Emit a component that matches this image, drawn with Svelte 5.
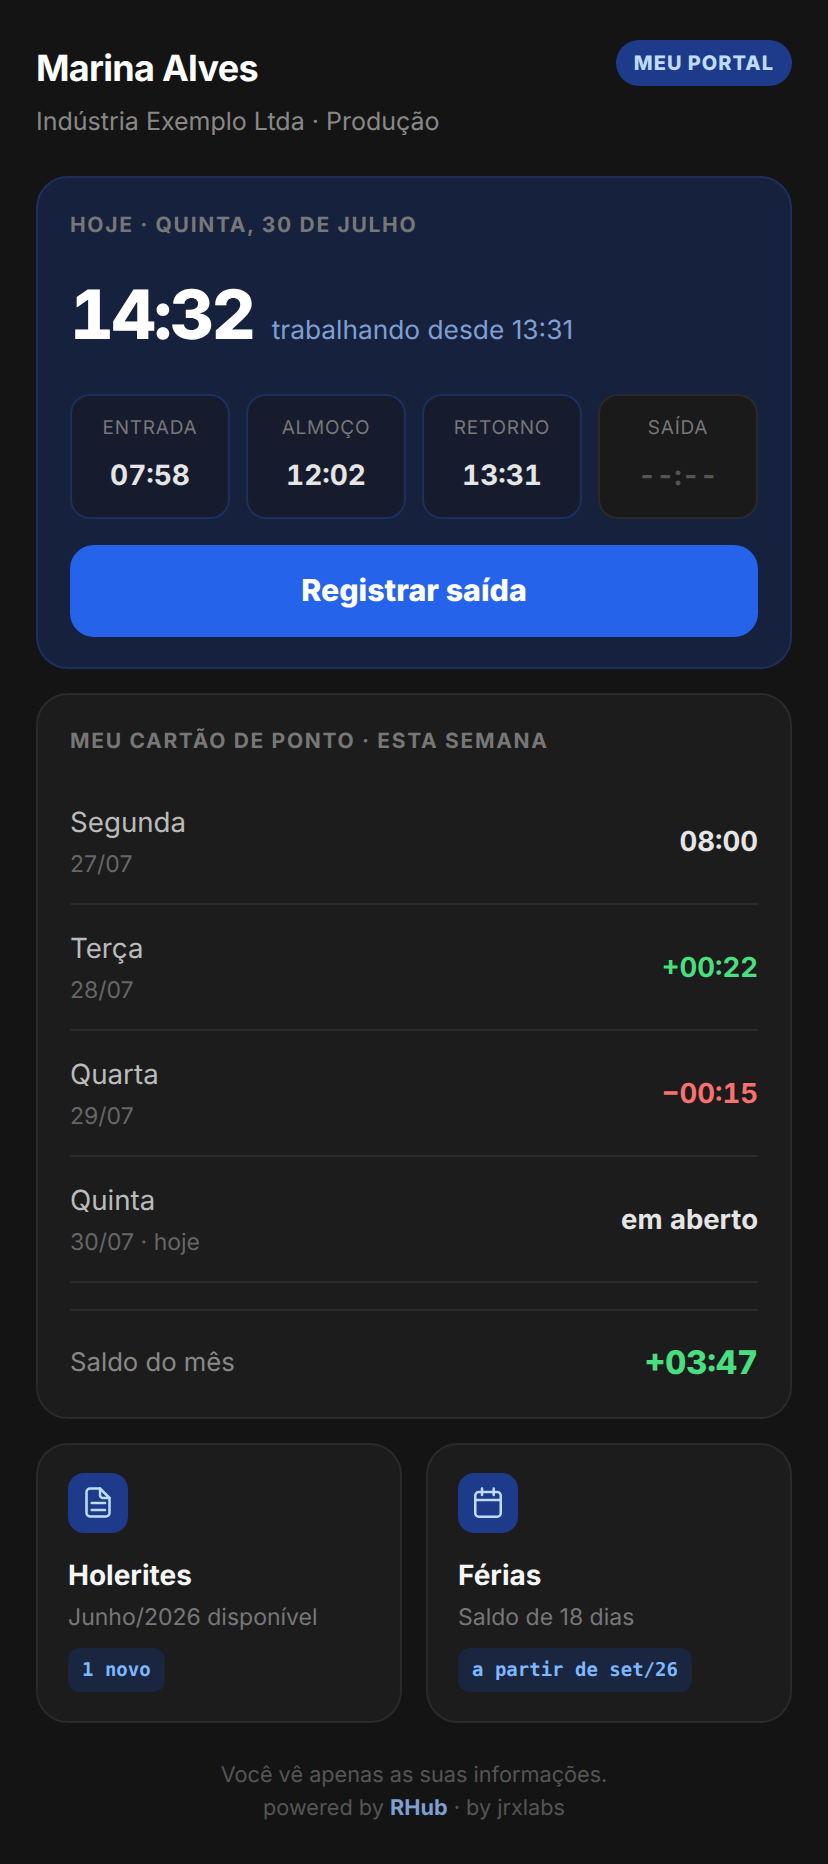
<script>
  const punches = [
    { label: 'Entrada', time: '07:58' },
    { label: 'Almoço', time: '12:02' },
    { label: 'Retorno', time: '13:31' },
    { label: 'Saída', time: '--:--', empty: true }
  ];

  const days = [
    { name: 'Segunda', date: '27/07', value: '08:00' },
    { name: 'Terça', date: '28/07', value: '+00:22', tone: 'pos' },
    { name: 'Quarta', date: '29/07', value: '−00:15', tone: 'neg' },
    { name: 'Quinta', date: '30/07 · hoje', value: 'em aberto' }
  ];
</script>

<div class="page">
  <header class="top">
    <div>
      <h1>Marina Alves</h1>
      <p class="org">Indústria Exemplo Ltda · Produção</p>
    </div>
    <span class="badge">MEU PORTAL</span>
  </header>

  <section class="card hero">
    <div class="eyebrow">Hoje · Quinta, 30 de julho</div>
    <div class="clock">
      <span class="now">14:32</span>
      <span class="since">trabalhando desde 13:31</span>
    </div>
    <div class="punches">
      {#each punches as p}
        <div class="punch" class:empty={p.empty}>
          <span class="punch-label">{p.label}</span>
          <span class="punch-time">{p.time}</span>
        </div>
      {/each}
    </div>
    <button type="button" class="register">Registrar saída</button>
  </section>

  <section class="card week">
    <div class="eyebrow">Meu cartão de ponto · Esta semana</div>
    <div class="days">
      {#each days as d}
        <div class="day">
          <div>
            <div class="day-name">{d.name}</div>
            <div class="day-date">{d.date}</div>
          </div>
          <div class="day-value {d.tone ?? ''}">{d.value}</div>
        </div>
      {/each}
    </div>
    <div class="total">
      <span>Saldo do mês</span>
      <span class="total-value">+03:47</span>
    </div>
  </section>

  <div class="links">
    <section class="card link">
      <div class="icon">
        <svg viewBox="0 0 40 40" width="40" height="40" fill="none" stroke="currentColor" stroke-width="2.5" stroke-linecap="round" stroke-linejoin="round">
          <path d="M22 5.5H12A3.5 3.5 0 0 0 8.5 9v21a3.5 3.5 0 0 0 3.5 3.5h16a3.5 3.5 0 0 0 3.5-3.5V15z" />
          <path d="M22 5.5V12a3 3 0 0 0 3 3h6.5" />
          <path d="M13.7 20h13.3M13.7 27h13.3" />
        </svg>
      </div>
      <h2>Holerites</h2>
      <p>Junho/2026 disponível</p>
      <span class="tag">1 novo</span>
    </section>
    <section class="card link">
      <div class="icon">
        <svg viewBox="0 0 40 40" width="40" height="40" fill="none" stroke="currentColor" stroke-width="2.5" stroke-linecap="round" stroke-linejoin="round">
          <rect x="7.25" y="9" width="25.5" height="24.75" rx="3.5" />
          <path d="M14 5.5v6.5M25.7 5.5v6.5M7.25 17h25.5" />
        </svg>
      </div>
      <h2>Férias</h2>
      <p>Saldo de 18 dias</p>
      <span class="tag">a partir de set/26</span>
    </section>
  </div>

  <footer>
    <div>Você vê apenas as suas informações.</div>
    <div>powered by <strong>RHub</strong> · by jrxlabs</div>
  </footer>
</div>

<style>
  :global(body) {
    background: #141414;
  }

  .page {
    box-sizing: border-box;
    width: 828px;
    min-height: 1864px;
    padding: 40px 36px;
    font-family: Inter, "Liberation Sans", sans-serif;
    color: #f5f5f5;
    text-rendering: geometricPrecision;
  }

  .top {
    display: flex;
    justify-content: space-between;
    align-items: flex-start;
    margin-bottom: 35px;
  }

  h1 {
    margin: 6px 0 0;
    font-size: 36px;
    line-height: 44px;
    font-weight: 700;
    letter-spacing: -0.72px;
    color: #fff;
  }

  .org {
    margin: 13px 0 0;
    font-size: 25px;
    line-height: 38px;
    color: #888;
  }

  .badge {
    display: flex;
    align-items: center;
    height: 46px;
    padding: 0 18px;
    border-radius: 999px;
    background: #1e3a8a;
    color: #bfdbfe;
    font-size: 20px;
    font-weight: 800;
    letter-spacing: 1px;
  }

  .card {
    box-sizing: border-box;
    border: 2px solid #2a2a2a;
    border-radius: 32px;
    background: #1c1c1c;
  }

  .hero {
    height: 493px;
    padding: 34px 32px 32px;
    margin-bottom: 24px;
    background: #16213e;
    border-color: #1e2f5e;
  }

  .eyebrow {
    font-size: 21px;
    line-height: 28px;
    font-weight: 700;
    letter-spacing: 1.68px;
    text-transform: uppercase;
    color: #777;
  }

  .clock {
    display: flex;
    align-items: baseline;
    gap: 18px;
    margin-top: 31px;
  }

  .now {
    font-size: 68px;
    line-height: 88px;
    font-weight: 800;
    letter-spacing: -2.04px;
    font-variant-numeric: tabular-nums;
    color: #fff;
  }

  .since {
    font-size: 26.3px;
    color: #7f9fd1;
  }

  .punches {
    display: grid;
    grid-template-columns: repeat(4, 1fr);
    gap: 16px;
    margin-top: 35px;
  }

  .punch {
    box-sizing: border-box;
    height: 125px;
    display: flex;
    flex-direction: column;
    align-items: center;
    padding-top: 19px;
    border: 2px solid #1e2f5e;
    border-radius: 20px;
    background: #161c2e;
  }

  .punch.empty {
    background: #1a1a1a;
    border-color: #2a2a2a;
  }

  .punch-label {
    font-size: 19px;
    line-height: 26px;
    letter-spacing: 0.76px;
    text-transform: uppercase;
    color: #777;
  }

  .punch-time {
    margin-top: 14px;
    font-size: 28px;
    line-height: 40px;
    font-weight: 700;
    font-variant-numeric: tabular-nums;
    color: #e5e5e5;
  }

  .empty .punch-time {
    color: #555;
  }

  .register {
    display: block;
    width: 100%;
    height: 92px;
    margin-top: 26px;
    border: none;
    border-radius: 24px;
    background: #2563eb;
    color: #fff;
    font-family: inherit;
    font-size: 30.4px;
    font-weight: 800;
    text-rendering: inherit;
  }

  .week {
    padding: 33px 32px 0;
    height: 726px;
    margin-bottom: 24px;
  }

  .days {
    margin-top: 23px;
  }

  .day {
    box-sizing: border-box;
    height: 126px;
    display: flex;
    justify-content: space-between;
    align-items: center;
    border-bottom: 2px solid #2a2a2a;
  }

  .day-name {
    font-size: 27.7px;
    line-height: 39px;
    color: #bbb;
  }

  .day-date {
    margin-top: 6px;
    font-size: 23px;
    line-height: 32px;
    color: #666;
  }

  .day-value {
    font-size: 27.5px;
    font-weight: 700;
    font-variant-numeric: tabular-nums;
    color: #e5e5e5;
  }

  .pos {
    color: #4ade80;
  }

  .neg {
    color: #f87171;
  }

  .total {
    display: flex;
    justify-content: space-between;
    align-items: center;
    margin-top: 26px;
    height: 102px;
    border-top: 2px solid #2a2a2a;
    font-size: 25.7px;
    color: #888;
  }

  .total-value {
    font-size: 32.5px;
    font-weight: 800;
    font-variant-numeric: tabular-nums;
    color: #4ade80;
  }

  .links {
    display: grid;
    grid-template-columns: 1fr 1fr;
    gap: 24px;
  }

  .link {
    height: 280px;
    padding: 28px 30px;
  }

  .icon {
    width: 60px;
    height: 60px;
    display: flex;
    align-items: center;
    justify-content: center;
    border-radius: 16px;
    background: #1e3a8a;
    color: #bfdbfe;
  }

  h2 {
    margin: 22px 0 0;
    font-size: 28px;
    line-height: 40px;
    font-weight: 700;
    color: #f5f5f5;
  }

  .link p {
    margin: 6px 0 0;
    font-size: 23px;
    line-height: 32px;
    color: #777;
  }

  .tag {
    display: inline-block;
    margin-top: 15px;
    padding: 0 14px;
    border-radius: 12px;
    background: #1a2540;
    color: #7db8ff;
    font-family: "DejaVu Sans Mono", monospace;
    font-size: 19px;
    line-height: 44px;
    font-weight: 700;
  }

  footer {
    margin-top: 36px;
    text-align: center;
    font-size: 21.7px;
    line-height: 33px;
    color: #555;
  }

  footer strong {
    color: #7f9fd1;
    font-weight: 700;
  }
</style>
